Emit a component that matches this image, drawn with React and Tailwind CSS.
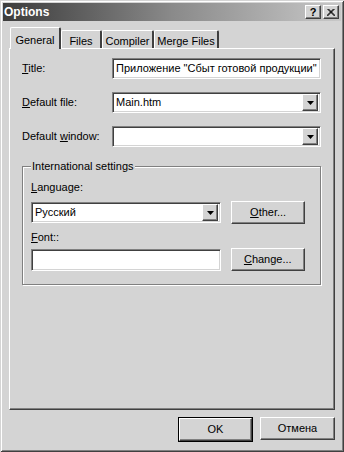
import React from "react";

// classic 3D edges
const raised =
  "border border-t-white border-l-white border-r-[#404040] border-b-[#404040] shadow-[inset_-1px_-1px_#808080]";
const sunken =
  "border border-t-[#808080] border-l-[#808080] border-r-white border-b-white shadow-[inset_1px_1px_#404040,inset_-1px_-1px_#d4d4d4]";

function Arrow() {
  return (
    <div className={`${raised} w-[16px] h-[17px] bg-[#d4d4d4] flex items-center justify-center shrink-0`}>
      <svg width="7" height="4" viewBox="0 0 7 4">
        <polygon points="0,0 7,0 3.5,4" fill="#000" />
      </svg>
    </div>
  );
}

function Combo({ value, width }) {
  return (
    <div className={`${sunken} bg-white h-[21px] flex items-center p-[2px] ${width}`}>
      <span className="flex-1 pl-[1px] leading-none">{value}</span>
      <Arrow />
    </div>
  );
}

function Button({ children, className = "" }) {
  return (
    <div className={`${raised} bg-[#d4d4d4] h-[23px] flex items-center justify-center ${className}`}>
      {children}
    </div>
  );
}

function Tab({ label, active }) {
  if (active) {
    return (
      <div className="relative z-10 -mb-[1px] w-[51px] h-[22px] bg-[#d4d4d4] border-l border-t border-l-white border-t-white border-r-2 border-r-[#404040] rounded-t-[2px] flex items-start justify-center pt-[4px]">
        {label}
      </div>
    );
  }
  return null;
}

export default function App() {
  const tabs = [
    { label: "Files", w: "w-[41px]" },
    { label: "Compiler", w: "w-[52px]" },
    { label: "Merge Files", w: "w-[65px]" },
  ];

  return (
    <div
      className="w-[344px] h-[452px] bg-[#d4d4d4] text-[11px] text-black"
      style={{ fontFamily: '"Liberation Sans", Arial, sans-serif' }}
    >
      <div className="w-full h-full p-[3px] flex flex-col shadow-[inset_1px_1px_#d4d4d4,inset_-1px_-1px_#404040,inset_2px_2px_white,inset_-2px_-2px_#808080]">
        {/* title bar */}
        <div className="h-[18px] bg-linear-to-r from-[#3c3c3c] via-[#8a8a8a] to-[#c8c8c8] flex items-center pl-[1px] pr-[2px]">
          <span className="text-white font-bold text-[12px] leading-none">Options</span>
          <div className="ml-auto flex items-center">
            <div className={`${raised} w-[16px] h-[14px] bg-[#d4d4d4] flex items-center justify-center font-bold text-[11px] leading-none`}>
              ?
            </div>
            <div className={`${raised} w-[16px] h-[14px] bg-[#d4d4d4] flex items-center justify-center ml-[2px]`}>
              <svg width="8" height="7" viewBox="0 0 8 7">
                <path d="M0.5 0 L7.5 7 M1.5 0 L8.5 7 M7.5 0 L0.5 7 M6.5 0 L-0.5 7" stroke="#000" strokeWidth="1" />
              </svg>
            </div>
          </div>
        </div>

        {/* body */}
        <div className="flex-1 flex flex-col px-[6px] pt-[6px] pb-[7px]">
          <div className="h-[21px] flex items-end pl-[1px]">
            <Tab label="General" active />
            {tabs.map((t) => (
              <div
                key={t.label}
                className={`${t.w} h-[18px] border-l border-t border-l-white border-t-white border-r-2 border-r-[#404040] rounded-t-[2px] flex items-start justify-center pt-[2px]`}
              >
                {t.label}
              </div>
            ))}
          </div>

          {/* tab page */}
          <div className="flex-1 border border-t-white border-l-white border-r-[#404040] border-b-[#404040] shadow-[inset_-1px_-1px_#808080] pl-[12px] pr-[13px] pt-[9px]">
            <div className="flex items-center h-[21px]">
              <span className="w-[90px]"><u>T</u>itle:</span>
              <div className={`${sunken} bg-white h-[21px] flex-1 flex items-center pl-[3px] whitespace-nowrap overflow-hidden`}>
                Приложение "Сбыт готовой продукции"
              </div>
            </div>
            <div className="flex items-center h-[21px] mt-[13px]">
              <span className="w-[90px]"><u>D</u>efault file:</span>
              <Combo value="Main.htm" width="flex-1" />
            </div>
            <div className="flex items-center h-[21px] mt-[13px]">
              <span className="w-[90px]">Default <u>w</u>indow:</span>
              <Combo value="" width="flex-1" />
            </div>

            {/* group box */}
            <div className="relative mt-[19px] border border-[#808080] shadow-[1px_1px_white,inset_1px_1px_white] pl-[8px] pr-[15px] pt-[14px] pb-[13px]">
              <span className="absolute -top-[7px] left-[8px] px-[1px] bg-[#d4d4d4] leading-[13px]">
                International settings
              </span>
              <div className="leading-[13px]"><u>L</u>anguage:</div>
              <div className="flex items-center mt-[7px]">
                <Combo value="Русский" width="w-[191px]" />
                <Button className="w-[74px] ml-[10px]"><span><u>O</u>ther...</span></Button>
              </div>
              <div className="leading-[13px] mt-[7px]"><u>F</u>ont::</div>
              <div className="flex items-center mt-[4px]">
                <div className={`${sunken} bg-white h-[22px] w-[191px]`} />
                <Button className="w-[75px] ml-[10px]"><span><u>C</u>hange...</span></Button>
              </div>
            </div>
          </div>

          {/* dialog buttons */}
          <div className="flex justify-end mt-[7px]">
            <div className="border border-black">
              <Button className="w-[73px] h-[21px]">OK</Button>
            </div>
            <Button className="w-[75px] ml-[7px]">Отмена</Button>
          </div>
        </div>
      </div>
    </div>
  );
}
